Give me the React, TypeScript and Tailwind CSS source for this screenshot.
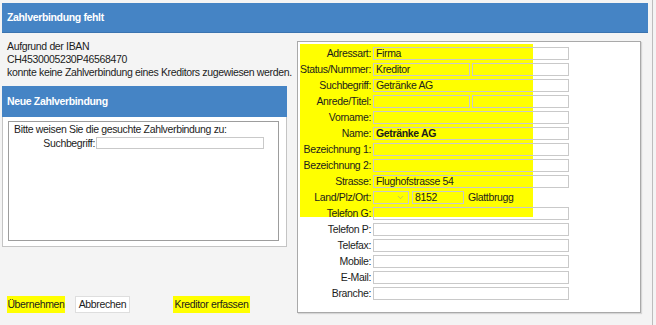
import { ChevronDown } from "lucide-react";

type Row = {
  label: string;
  value?: string;
  bold?: boolean;
  split?: [string, string];
  land?: boolean;
};

const rows: Row[] = [
  { label: "Adressart:", value: "Firma" },
  { label: "Status/Nummer:", split: ["Kreditor", ""] },
  { label: "Suchbegriff:", value: "Getränke AG" },
  { label: "Anrede/Titel:", split: ["", ""] },
  { label: "Vorname:", value: "" },
  { label: "Name:", value: "Getränke AG", bold: true },
  { label: "Bezeichnung 1:", value: "" },
  { label: "Bezeichnung 2:", value: "" },
  { label: "Strasse:", value: "Flughofstrasse 54" },
  { label: "Land/Plz/Ort:", land: true },
  { label: "Telefon G:", value: "" },
  { label: "Telefon P:", value: "" },
  { label: "Telefax:", value: "" },
  { label: "Mobile:", value: "" },
  { label: "E-Mail:", value: "" },
  { label: "Branche:", value: "" },
];

function Field({ value, width, bold }: { value: string; width: string; bold?: boolean }) {
  return (
    <div
      className={`${width} h-[13px] border border-[#c9c9c9] px-[2px] leading-[11px] whitespace-nowrap overflow-hidden ${
        bold ? "font-bold" : ""
      }`}
    >
      {value}
    </div>
  );
}

function FormRow({ row }: { row: Row }) {
  return (
    <div className="flex h-[16px] items-start">
      <div className="w-[73px] text-right leading-[13px] whitespace-nowrap">{row.label}</div>
      <div className="ml-[2px] flex items-start">
        {row.split ? (
          <div className="flex gap-[2px]">
            <Field value={row.split[0]} width="w-[97px]" />
            <Field value={row.split[1]} width="w-[97px]" />
          </div>
        ) : row.land ? (
          <div className="flex items-start">
            <div className="w-[36px] h-[13px] border border-[#c9c9c9] flex items-center justify-end pr-[3px]">
              <ChevronDown size={9} color="#9a9a9a" strokeWidth={1.5} />
            </div>
            <div className="ml-[3px]">
              <Field value="8152" width="w-[52px]" />
            </div>
            <span className="ml-[4px] leading-[13px]">Glattbrugg</span>
          </div>
        ) : (
          <Field value={row.value ?? ""} width="w-[196px]" bold={row.bold} />
        )}
      </div>
    </div>
  );
}

export default function App() {
  return (
    <div className="relative w-[656px] h-[325px] overflow-hidden bg-[#f4f4f4] pt-[3px] pl-[2px] font-['Liberation_Sans',Arial,sans-serif] text-[10.5px] tracking-[-0.35px] text-[#1c1c1c]">
      <div className="w-[646px] h-[30px] bg-[#4584c5] border-b border-[#3b74b0] text-white font-bold flex items-center pl-[5px]">
        Zahlverbindung fehlt
      </div>

      <div className="flex">
        <div className="w-[285px] flex flex-col">
          <div className="h-[53px] pl-[5px] pt-[7px] leading-[13px]">
            <div>Aufgrund der IBAN</div>
            <div>CH4530005230P46568470</div>
            <div className="whitespace-nowrap">konnte keine Zahlverbindung eines Kreditors zugewiesen werden.</div>
          </div>

          <div className="h-[31px] bg-[#4584c5] text-white font-bold flex items-center pl-[5px]">
            Neue Zahlverbindung
          </div>
          <div className="h-[130px] bg-white border border-t-0 border-[#c4c4c4] pt-[4px] pl-[5px] pr-[7px]">
            <div className="h-[120px] border border-[#9d9d9d] pl-[5px] pt-[1px]">
              <div className="leading-[13px]">Bitte weisen Sie die gesuchte Zahlverbindung zu:</div>
              <div className="flex items-start mt-[1px]">
                <div className="w-[81px] text-right leading-[12px]">Suchbegriff:</div>
                <div className="ml-[1px] w-[168px] h-[12px] border border-[#c9c9c9]" />
              </div>
            </div>
          </div>

          <div className="mt-[49px] ml-[5px] flex items-center">
            <button className="h-[17px] w-[58px] bg-[#ffff00] leading-[17px]">Übernehmen</button>
            <button className="ml-[10px] h-[17px] w-[55px] bg-white border border-[#dedede] leading-[15px]">
              Abbrechen
            </button>
            <button className="ml-[43px] h-[17px] w-[77px] bg-[#ffff00] leading-[17px]">Kreditor erfassen</button>
          </div>
        </div>

        <div className="ml-[10px] mt-[8px] w-[344px] h-[272px] bg-white border border-[#a9a9a9] shadow-[1px_1px_1px_rgba(0,0,0,0.12)]">
          <div className="relative pt-[5px]">
            <div className="absolute left-[2px] top-[2px] w-[233px] h-[173px] bg-[#ffff00]" />
            <div className="relative">
              {rows.map((r) => (
                <FormRow key={r.label} row={r} />
              ))}
            </div>
          </div>
        </div>
      </div>

      <div className="absolute right-[3px] top-0 w-[1px] h-[325px] bg-[#bdbdbd]" />
    </div>
  );
}
